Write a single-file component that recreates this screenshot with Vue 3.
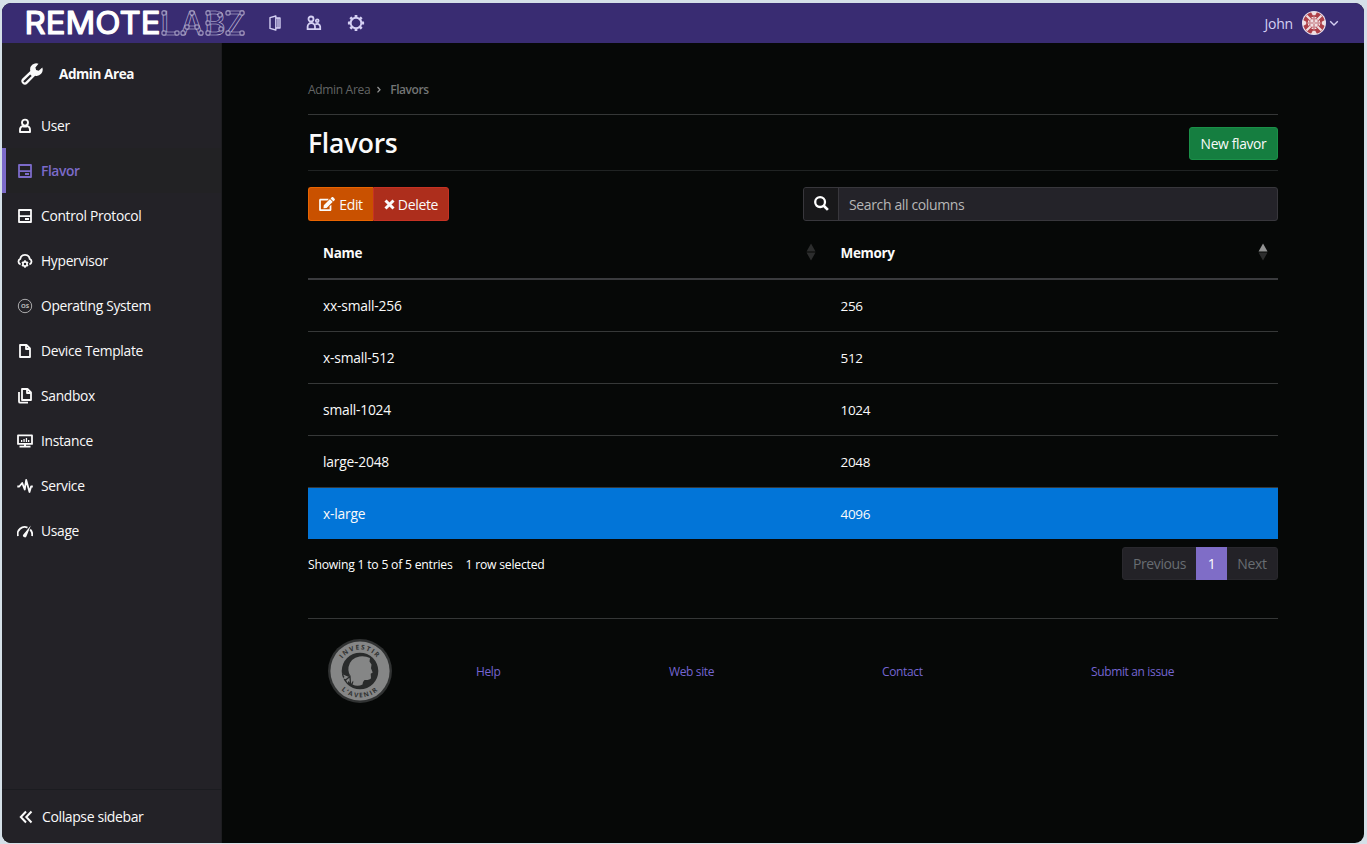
<script setup>
const navItems = [
  { label: 'User', icon: 'user' },
  { label: 'Flavor', icon: 'drive', active: true },
  { label: 'Control Protocol', icon: 'drive' },
  { label: 'Hypervisor', icon: 'cloud' },
  { label: 'Operating System', icon: 'os' },
  { label: 'Device Template', icon: 'file' },
  { label: 'Sandbox', icon: 'files' },
  { label: 'Instance', icon: 'monitor' },
  { label: 'Service', icon: 'pulse' },
  { label: 'Usage', icon: 'gauge' },
]
const rows = [
  { name: 'xx-small-256', memory: '256' },
  { name: 'x-small-512', memory: '512' },
  { name: 'small-1024', memory: '1024' },
  { name: 'large-2048', memory: '2048' },
  { name: 'x-large', memory: '4096', selected: true },
]
const links = ['Help', 'Web site', 'Contact', 'Submit an issue']
const nodes = [
  [164, 13], [164, 33], [177, 33],
  [192, 13], [183, 33], [201, 33], [187, 27], [197, 27],
  [208, 13], [208, 23], [208, 33], [220, 15], [221, 29],
  [228, 13], [242, 13], [228, 33], [242, 33],
]
</script>

<template>
  <div class="desktop">
    <div class="window">
      <header class="topbar">
        <svg class="logo" width="228" height="40" viewBox="22 3 228 40">
          <text class="logo-bold" x="24.5" y="34.3" textLength="136" lengthAdjust="spacingAndGlyphs">REMOTE</text>
          <text class="logo-outline" x="160.500 180.500 204.500 225" y="34.7">LABZ</text>
          <g class="logo-nodes">
            <rect v-for="(n, i) in nodes" :key="i" :x="n[0] - 2" :y="n[1] - 2" width="4" height="4" rx="0.8" />
          </g>
        </svg>
        <svg class="top-icon lab" width="16" height="18" viewBox="0 0 16 18">
          <path d="M8.800 2 3 3.600v10.800L8.800 16zM8.800 4h4.200v10H8.800M11 4v10" fill="none" stroke="currentColor" stroke-width="1.4" stroke-linejoin="round" />
        </svg>
        <svg class="top-icon people" width="16" height="16" viewBox="0 0 16 16">
          <g fill="none" stroke="currentColor" stroke-width="1.8">
            <circle cx="5" cy="4" r="2.5" />
            <path d="M1.600 14.100v-2.400a3.700 3.700 0 0 1 7.400 0v2.400z" />
            <path d="M9 14.100h5.200v-2.300a3 3 0 0 0-5-2.200" />
            <circle cx="11.200" cy="5.800" r="1.400" />
          </g>
        </svg>
        <svg class="top-icon cog" width="18" height="18" viewBox="0 0 18 18">
          <circle cx="9" cy="9" r="5.3" fill="none" stroke="currentColor" stroke-width="1.9" />
          <g fill="currentColor">
            <rect v-for="a in 8" :key="a" x="7.6" y="0.9" width="2.8" height="2.9" rx=".5" :transform="`rotate(${a * 45} 9 9)`" />
          </g>
        </svg>
        <div class="account">
          <span class="account-name">John</span>
          <svg class="avatar" width="24" height="24" viewBox="0 0 24 24">
            <circle cx="12" cy="12" r="12" fill="#e9e2ee" />
            <circle cx="12" cy="12" r="10.9" fill="#ad3f48" />
            <g fill="#f0dfe2">
              <g v-for="q in 4" :key="q" :transform="`rotate(${q * 90} 12 12)`">
                <path d="M9 1h6l-1.700 3.200h-2.600zM3.800 5.200 5.200 3.800l4 4-1.400 1.400z" />
                <path d="M8.300 8.300h3v3h-3zM6 9.600h1.500v1.700H6zM9.600 6h1.700v1.500H9.600z" />
              </g>
              <path d="M11.600 5.500h.800v13h-.800zM5.500 11.600h13v.800h-13z" />
            </g>
          </svg>
          <svg width="10" height="8" viewBox="0 0 10 8"><path d="M1.200 2.300 5 6l3.800-3.700" fill="none" stroke="currentColor" stroke-width="1.400" /></svg>
        </div>
      </header>

      <div class="body">
        <aside class="sidebar">
          <div class="side-title">
            <svg width="22" height="22" viewBox="0 0 22 22">
              <path d="M17.500.700a6.200 6.200 0 0 0-8.200 7.300L1.400 15.600a3.700 3.700 0 0 0 0 5 3.700 3.700 0 0 0 5.100 0l7.600-7.900A6.200 6.200 0 0 0 21.300 4.500l-3.600 3.300-2.600-.700-.700-2.700zM4 19.400a1.200 1.200 0 0 1-1.500-1.500l6.700-6.500 1.500 1.500z" fill="currentColor" fill-rule="evenodd" />
            </svg>
            <span>Admin Area</span>
          </div>
          <nav>
            <a v-for="item in navItems" :key="item.label" class="nav-item" :class="{ active: item.active }">
              <svg width="16" height="16" viewBox="0 0 16 16">
                <g v-if="item.icon === 'user'" fill="none" stroke="currentColor" stroke-width="1.9">
                  <circle cx="8" cy="4.6" r="3" />
                  <path d="M5.400 8.200Q3 9 3 12v2h10v-2q0-3-2.400-3.800Q8 9.100 5.400 8.200z" stroke-linejoin="round" />
                </g>
                <g v-else-if="item.icon === 'drive'">
                  <path d="M2 2h12v12H2zM2 8.200h12" fill="none" stroke="currentColor" stroke-width="1.800" stroke-linejoin="round" />
                  <path d="M8 10h4v2H8z" fill="currentColor" />
                </g>
                <g v-else-if="item.icon === 'cloud'">
                  <path d="M3.600 11.300A2.900 2.900 0 0 1 3.300 5.800 4.800 4.800 0 0 1 12.700 5.800 2.900 2.900 0 0 1 12.400 11.300" fill="none" stroke="currentColor" stroke-width="1.800" />
                  <circle cx="8" cy="11" r="2.100" fill="none" stroke="currentColor" stroke-width="1.700" />
                  <path d="M8 7.300v1.500M8 13v1.700M4.900 9.100l1.300.800M9.800 12.100l1.300.800M4.900 12.900l1.300-.800M9.800 9.900l1.300-.800" stroke="currentColor" stroke-width="1.700" />
                </g>
                <g v-else-if="item.icon === 'os'" opacity=".7">
                  <circle cx="8" cy="8" r="6.700" fill="none" stroke="currentColor" stroke-width=".9" />
                  <text class="os-text" x="8" y="10.400" text-anchor="middle">OS</text>
                </g>
                <path v-else-if="item.icon === 'file'" d="M3 2h6.500L13 5.500V14H3zM9 2v4h4" fill="none" stroke="currentColor" stroke-width="1.800" stroke-linejoin="round" />
                <g v-else-if="item.icon === 'files'" fill="none" stroke="currentColor" stroke-width="1.800" stroke-linejoin="round">
                  <path d="M5 1h5.500L14 4.500V12H5zM10 1v4h4" />
                  <path d="M2 4v9.400q0 1.300 1.300 1.300H11" />
                </g>
                <g v-else-if="item.icon === 'monitor'">
                  <path d="M1 2.400h14v8.500H1z" fill="none" stroke="currentColor" stroke-width="1.800" stroke-linejoin="round" />
                  <path d="M4 7h1.300v2H4zM6.400 6h1.300v3H6.400zM8.800 5h1.300v4H8.800zM11 7h1.300v2H11zM7 11h2v2H7zM2.500 12.800h11v1.700h-11z" fill="currentColor" />
                </g>
                <path v-else-if="item.icon === 'pulse'" d="M.300 8.500h2L5.200 5l2.500 6.500L9.200 2l3.300 12 1.600-5.500h1.700" fill="none" stroke="currentColor" stroke-width="1.800" stroke-linejoin="round" />
                <g v-else>
                  <path d="M1 13a7 7 0 0 1 9.500-8.400M13.200 6.500A7 7 0 0 1 15 13" fill="none" stroke="currentColor" stroke-width="1.800" />
                  <path d="M13.800 2.500 9.600 13a1.800 1.800 0 1 1-3-1.800z" fill="currentColor" />
                </g>
              </svg>
              <span>{{ item.label }}</span>
            </a>
          </nav>
          <div class="collapse">
            <svg width="14" height="14" viewBox="0 0 14 14"><path d="M7 1.500 1.800 7 7 12.500M12.500 1.500 7.300 7l5.200 5.500" fill="none" stroke="currentColor" stroke-width="2" /></svg>
            <span>Collapse sidebar</span>
          </div>
        </aside>

        <main class="content">
          <div class="crumbs">
            <span>Admin Area</span>
            <svg width="6" height="8" viewBox="0 0 6 8"><path d="m1.500 1 2.500 2.700-2.500 2.700" fill="none" stroke="currentColor" stroke-width="1.300" /></svg>
            <b>Flavors</b>
          </div>
          <div class="heading">
            <h1>Flavors</h1>
            <button class="btn-new">New flavor</button>
          </div>
          <div class="tools">
            <div class="btn-group">
              <button class="btn-edit">
                <svg width="16" height="14" viewBox="0 0 576 512" fill="currentColor"><path d="M402.600 83.200l90.200 90.200c3.800 3.800 3.800 10 0 13.800L274.400 405.600l-92.800 10.300c-12.400 1.400-22.900-9.100-21.500-21.500l10.300-92.800L388.800 83.200c3.800-3.800 10-3.800 13.800 0zm162-22.900l-48.800-48.800c-15.200-15.200-39.900-15.200-55.200 0l-35.400 35.400c-3.800 3.800-3.800 10 0 13.800l90.200 90.200c3.800 3.800 10 3.800 13.800 0l35.400-35.400c15.200-15.300 15.200-40 0-55.200zM384 346.200V448H64V128h229.800c3.200 0 6.200-1.300 8.500-3.500l40-40c7.600-7.600 2.200-20.500-8.500-20.500H48C21.500 64 0 85.500 0 112v352c0 26.500 21.500 48 48 48h352c26.500 0 48-21.500 48-48V306.200c0-10.700-12.900-16-20.500-8.500l-40 40c-2.200 2.300-3.500 5.300-3.500 8.500z" /></svg>
                <span>Edit</span>
              </button>
              <button class="btn-delete">
                <svg width="11" height="11" viewBox="0 0 11 11"><path d="m1.500 1.500 8 8m0-8-8 8" stroke="currentColor" stroke-width="3" /></svg>
                <span>Delete</span>
              </button>
            </div>
            <div class="search">
              <div class="search-icon">
                <svg width="15" height="15" viewBox="0 0 15 15" fill="none" stroke="currentColor"><circle cx="6.100" cy="6.100" r="4.900" stroke-width="2.300" /><path d="m9.500 9.500 4.400 4.400" stroke-width="2.700" /></svg>
              </div>
              <div class="search-field">Search all columns</div>
            </div>
          </div>

          <div class="table">
            <div class="tr th">
              <div class="cell"><span>Name</span><svg class="sort" width="10" height="18" viewBox="0 0 10 18"><path d="m5 .500 4.500 8h-9z" fill="#2c2d2d" /><path d="M.500 9.500h9L5 17.500z" fill="#2c2d2d" /></svg></div>
              <div class="cell"><span>Memory</span><svg class="sort" width="10" height="18" viewBox="0 0 10 18"><path d="m5 .500 4.500 8h-9z" fill="#929393" /><path d="M.500 9.500h9L5 17.500z" fill="#2c2d2d" /></svg></div>
            </div>
            <div v-for="row in rows" :key="row.name" class="tr" :class="{ selected: row.selected }">
              <div class="cell name">{{ row.name }}</div>
              <div class="cell">{{ row.memory }}</div>
            </div>
          </div>

          <div class="table-foot">
            <div class="info"><span>Showing 1 to 5 of 5 entries</span><span>1 row selected</span></div>
            <div class="pages"><span class="prev">Previous</span><span class="current">1</span><span class="next">Next</span></div>
          </div>

          <footer>
            <svg class="seal" width="64" height="64" viewBox="0 0 64 64">
              <defs>
                <path id="seal-top" d="M10.500 32a21.500 21.500 0 0 1 43 0" />
                <path id="seal-bottom" d="M5.500 32a26.500 26.500 0 0 0 53 0" />
              </defs>
              <circle cx="32" cy="32" r="32" fill="#303232" />
              <circle cx="32" cy="32" r="29.600" fill="#858686" />
              <circle cx="32" cy="32" r="18.300" fill="#292b2b" />
              <path d="M24.500 45.500q1.500-3 0-6-5-5-4-11.500 2-9 11-10.500 6-.700 10.500 1.500l-.500 3.500 2 3-.500 3.700 1.700 4.300-2 1.200.300 4.500q-1 2-6.500 1.800-2 1.500-2 4.500-5 2.500-10 0z" fill="#858686" />
              <path d="m14.500 34.500 5.500 3 4-2 1.500 5.500-2.500 4-2.500-3-1 2-2-4-3-.500 2-1.500z" fill="#858686" />
              <path d="m15 35 7 2.500m-5 4 5-4 .500 8" fill="none" stroke="#292b2b" stroke-width="1.300" />
              <text class="seal-text" text-anchor="middle"><textPath href="#seal-top" startOffset="50%">INVESTIR</textPath></text>
              <text class="seal-text" text-anchor="middle"><textPath href="#seal-bottom" startOffset="50%">L’AVENIR</textPath></text>
            </svg>
            <a v-for="link in links" :key="link">{{ link }}</a>
          </footer>
        </main>
      </div>
    </div>
  </div>
</template>

<style>
body { margin: 0; overflow: hidden; }
</style>

<style scoped>
* { box-sizing: border-box; }
.desktop {
  width: 1367px; height: 844px; padding: 3px 3px 1px 2px; background: #d5e0e8;
  font-family: "Open Sans", "Noto Sans", sans-serif; font-size: 14px; line-height: 20px; letter-spacing: -0.32px; color: #fafafa;
}
.window { height: 840px; border-radius: 9px; overflow: hidden; background: #060807; display: flex; flex-direction: column; }
svg { display: block; flex: none; }
.topbar { height: 40px; flex: none; background: #392c72; display: flex; align-items: center; color: #d5d0f3; padding-left: 20px; }
.logo-bold { font: 400 31.500px "Inter", sans-serif; fill: #fff; stroke: #fff; stroke-width: 1.200px; stroke-linejoin: round; letter-spacing: 0; }
.logo-outline { font: 500 32px "Inter", sans-serif; fill: none; stroke: #c9c3df; stroke-width: .6px; letter-spacing: 0; }
.logo-nodes { fill: #392c72; stroke: #d8d4e8; stroke-width: .8px; }
.lab { margin-left: 17px; }
.people { margin-left: 23px; }
.cog { margin-left: 25px; }
.account { margin-left: auto; padding-right: 25px; display: flex; align-items: center; gap: 3px; }
.account-name { margin-right: 6px; padding-top: 2px; letter-spacing: -0.200px; }
.body { flex: 1; display: flex; }
.sidebar { width: 220px; background: #232227; border-right: 1px solid #1d1d20; display: flex; flex-direction: column; }
.side-title { height: 60px; display: flex; align-items: center; padding: 1px 0 0 19px; gap: 16px; font-size: 13.500px; font-weight: 700; letter-spacing: -0.420px; }
.nav-item { height: 45px; display: flex; align-items: center; padding-left: 15px; gap: 8px; font-size: 13.800px; letter-spacing: -0.300px; }
.nav-item span { padding-top: 1px; }
.nav-item.active { background: #222224; border-left: 4px solid #7c6bc9; padding-left: 11px; color: #7c6bc9; font-weight: 600; letter-spacing: -0.420px; }
.os-text { font: 700 6px "Open Sans", sans-serif; fill: currentColor; letter-spacing: 0; }
.collapse { margin-top: auto; height: 54px; border-top: 1px solid #1b1c20; display: flex; align-items: center; padding: 1px 0 0 17px; gap: 9px; letter-spacing: -0.380px; }
.content { width: 970px; margin-left: 86px; }
.crumbs { height: 72px; padding-top: 23px; border-bottom: 1px solid #353737; display: flex; align-items: center; color: #636565; font-size: 12px; }
.crumbs svg { margin: 0 8px 0 6px; color: #929393; }
.crumbs b { font-weight: 600; color: #737575; letter-spacing: -0.450px; }
.heading { height: 56px; border-bottom: 1px solid #202323; display: flex; align-items: center; justify-content: space-between; padding-top: 2px; }
h1 { margin: 0 0 1px; font-size: 26.500px; font-weight: 600; line-height: 36px; letter-spacing: -0.300px; }
button { font: inherit; letter-spacing: inherit; color: #fafafa; display: flex; align-items: center; justify-content: center; height: 34px; }
button span { padding-top: 1px; }
.btn-new { width: 89px; height: 33px; padding: 0; background: #157e40; border: 1px solid #1a9048; border-radius: 3px; font-size: 13.800px; }
.tools { display: flex; justify-content: space-between; margin-top: 16px; height: 34px; }
.btn-group { display: flex; }
.btn-edit { width: 65px; padding: 0; gap: 4px; background: #c95100; border: 1px solid #e96400; border-right: 0; border-radius: 3px 0 0 3px; }
.btn-delete { width: 76px; padding: 0; gap: 3px; background: #ad2e1c; border: 1px solid #c63223; border-radius: 0 3px 3px 0; }
.search { width: 475px; display: flex; border: 1px solid #38373c; border-radius: 3px; background: #242329; overflow: hidden; }
.search-icon { width: 35px; background: #18181a; border-right: 1px solid #38373c; padding: 8px 0 0 10px; color: #fff; }
.search-field { padding: 7px 10px; color: #b7b7b7; line-height: 20px; letter-spacing: -0.370px; }
.table { padding-top: 5px; }
.tr { height: 52px; border-top: 1px solid #363838; display: grid; grid-template-columns: 517.500px 452.500px; align-items: center; padding-top: 1px; }
.th { border-top: 0; height: 52px; font-weight: 700; }
.th + .tr { border-top: 2px solid #3a3b3e; height: 53px; }
.cell { padding-left: 15px; display: flex; justify-content: space-between; align-items: center; font-size: 13.500px; }
.name { font-size: 13.800px; letter-spacing: -0.200px; }
.sort { margin: -2px 10px 0 0; }
.selected { background: #0275d8; }
.table-foot { height: 79px; padding-top: 8px; display: flex; justify-content: space-between; align-items: flex-start; }
.info { display: flex; gap: 13px; padding-top: 8px; font-size: 12.200px; letter-spacing: -0.220px; color: #fff; }
.pages { display: flex; height: 33px; border: 1px solid #29282d; border-radius: 3px; background: #232227; color: #686d72; }
.pages span { display: flex; align-items: center; justify-content: center; padding-top: 1px; }
.prev { width: 73px; letter-spacing: -0.400px; }
.current { width: 31px; margin: -1px 0; background: #7f6dc7; color: #fff; }
.next { width: 50px; }
footer { height: 105px; border-top: 1px solid #353737; display: grid; grid-template-columns: 148px 193px 213px 209px auto; align-items: center; padding-left: 20px; color: #7465d2; font-size: 12px; letter-spacing: -0.360px; }
footer a { padding-top: 2px; }
.seal-text { font: 700 6.500px "Open Sans", sans-serif; letter-spacing: 1.500px; fill: #303232; }
</style>
